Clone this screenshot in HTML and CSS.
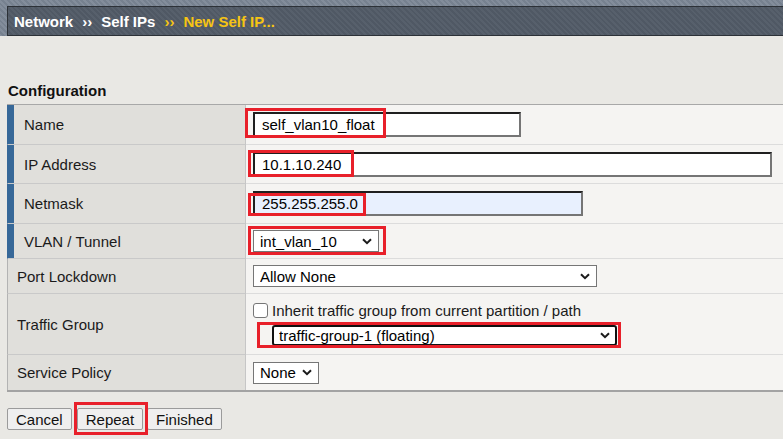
FILE: index.html
```html
<!DOCTYPE html>
<html lang="en">
<head>
<meta charset="utf-8">
<title>New Self IP</title>
<link rel="stylesheet" href="styles.css">
</head>
<body>
<header class="topbar">
  <nav class="crumbs">
    <span class="crumb">Network</span>
    <span class="sep">&rsaquo;&rsaquo;</span>
    <span class="crumb">Self IPs</span>
    <span class="sep current">&rsaquo;&rsaquo;</span>
    <span class="crumb current">New Self IP...</span>
  </nav>
</header>
<main class="page">
  <h2 class="section-title">Configuration</h2>
  <div class="config">
    <div class="label req">Name</div>
    <div class="value">
      <span class="mark mark-name"><input class="text w-name" type="text" value="self_vlan10_float"></span>
    </div>

    <div class="label req">IP Address</div>
    <div class="value">
      <span class="mark mark-ip"><input class="text w-ip" type="text" value="10.1.10.240"></span>
    </div>

    <div class="label req">Netmask</div>
    <div class="value">
      <span class="mark mark-mask"><input class="text w-mask autofill" type="text" value="255.255.255.0"></span>
    </div>

    <div class="label req">VLAN / Tunnel</div>
    <div class="value">
      <span class="mark mark-vlan">
        <span class="select w-vlan"><select><option>int_vlan_10</option></select><svg class="chev" width="10" height="7" viewBox="0 0 10 7"><polyline points="1,1.2 5,5.2 9,1.2"/></svg></span>
      </span>
    </div>

    <div class="label">Port Lockdown</div>
    <div class="value">
      <span class="select w-port"><select><option>Allow None</option></select><svg class="chev" width="10" height="7" viewBox="0 0 10 7"><polyline points="1,1.2 5,5.2 9,1.2"/></svg></span>
    </div>

    <div class="label">Traffic Group</div>
    <div class="value stack">
      <label class="inherit"><input class="check" type="checkbox">Inherit traffic group from current partition / path</label>
      <span class="mark mark-tg indent">
        <span class="select focused w-tg"><select><option>traffic-group-1 (floating)</option></select><svg class="chev" width="10" height="7" viewBox="0 0 10 7"><polyline points="1,1.2 5,5.2 9,1.2"/></svg></span>
      </span>
    </div>

    <div class="label last">Service Policy</div>
    <div class="value last">
      <span class="select w-svc"><select><option>None</option></select><svg class="chev" width="10" height="7" viewBox="0 0 10 7"><polyline points="1,1.2 5,5.2 9,1.2"/></svg></span>
    </div>
  </div>
  <div class="actions">
    <button class="btn" type="button">Cancel</button>
    <span class="mark mark-repeat"><button class="btn" type="button">Repeat</button></span>
    <button class="btn" type="button">Finished</button>
  </div>
</main>
</body>
</html>
```

FILE: styles.css
```css
*, *::before, *::after { box-sizing: border-box; }

html, body {
  margin: 0;
  padding: 0;
}

body {
  background: #e9e8e4;
  font-family: "Liberation Sans", Arial, sans-serif;
  font-size: 15px;
  color: #1a1a1a;
  width: 783px;
  height: 439px;
  overflow: hidden;
}

/* ---------- header ---------- */
.topbar {
  height: 36px;
  padding: 6px 0 0 7px;
  background-color: #7b8695;
  background-image: repeating-linear-gradient(45deg, rgba(255,255,255,0.06) 0 2px, rgba(0,0,0,0.04) 2px 4px);
}

.crumbs {
  height: 30px;
  display: flex;
  align-items: center;
  gap: 9px;
  padding-left: 6px;
  background-color: #525b67;
  background-image: repeating-linear-gradient(45deg, rgba(255,255,255,0.03) 0 2px, rgba(0,0,0,0.03) 2px 4px);
  border: 1px solid #2c3137;
  border-right: none;
  font-weight: bold;
  color: #ffffff;
  white-space: nowrap;
}

.crumbs .current { color: #f6c414; }

/* ---------- page ---------- */
.page {
  padding-left: 7px;
}

.section-title {
  margin: 0;
  padding-top: 46px;
  height: 68px;
  font-size: 15px;
  line-height: 18px;
  font-weight: bold;
  color: #111;
  padding-left: 1px;
}

.config {
  display: grid;
  grid-template-columns: 239px 1fr;
  grid-template-rows: 40px 39px 40px 35px 35px 61px 35px;
  border-top: 1px solid #a8a8a8;
  border-bottom: 2px solid #a3a3a3;
}

.label {
  display: flex;
  align-items: center;
  padding-left: 9px;
  background: #e0dfdb;
  border-left: 1px solid #b3b3b3;
  border-right: 1px solid #c6c6c6;
  border-bottom: 1px solid #c9c9c9;
  color: #1a1a1a;
}

.label.req {
  padding-left: 16px;
  border-left-color: #376898;
  box-shadow: inset 6px 0 0 #376898;
}

.value {
  display: flex;
  align-items: center;
  padding-left: 7px;
  background: #f5f4f2;
  border-bottom: 1px solid #dcdcdc;
}

.label.last, .value.last { border-bottom: none; }

.value.stack {
  flex-direction: column;
  align-items: flex-start;
  justify-content: center;
  gap: 6px;
}

/* ---------- inputs ---------- */
.text {
  height: 25px;
  margin: 0;
  padding: 0 0 0 7px;
  font: inherit;
  color: #000;
  background: #fff;
  border-style: solid;
  border-width: 2px;
  border-color: #1f1f1f #757575 #757575 #1f1f1f;
  outline: none;
}

.w-name { width: 268px; }
.w-ip { width: 519px; }
.w-mask { width: 330px; }
.text.autofill { background: #e8f0fe; }

.select {
  display: inline-flex;
  align-items: center;
  height: 22px;
  padding-right: 6px;
  background: #fff;
  border: 1px solid #767676;
}

.select select {
  flex: 1;
  min-width: 0;
  height: 100%;
  margin: 0;
  padding: 0 0 0 6px;
  border: none;
  background: transparent;
  font: inherit;
  color: #000;
  -webkit-appearance: none;
  appearance: none;
  outline: none;
}

.chev {
  flex: none;
  fill: none;
  stroke: #1b1b1b;
  stroke-width: 2;
}

.select.focused {
  border: 2px solid #111;
  border-radius: 3px;
  padding-right: 5px;
  height: 21px;
}
.select.focused select { padding-left: 5px; }

.w-vlan { width: 126px; }
.w-port { width: 344px; }
.w-tg { width: 345px; }
.w-svc { width: 66px; }

.inherit {
  display: flex;
  align-items: center;
  line-height: 17px;
  color: #1a1a1a;
}

.check {
  -webkit-appearance: none;
  appearance: none;
  width: 15px;
  height: 15px;
  margin: 0 4px 0 0;
  background: #fff;
  border: 1px solid #767676;
  border-radius: 3px;
}

.indent { margin-left: 19px; }

/* ---------- buttons ---------- */
.actions {
  display: flex;
  align-items: center;
  gap: 5px;
  margin-top: 16px;
}

.btn {
  height: 22px;
  margin: 0;
  padding: 0 8px;
  font: inherit;
  color: #111;
  background: #efefef;
  border: 1px solid #9b9b9b;
  border-radius: 2px;
}

.mark-repeat + .btn { margin-left: -1px; }

/* ---------- red annotation frames ---------- */
.mark {
  position: relative;
  display: inline-flex;
}

.mark::after {
  content: "";
  position: absolute;
  border: 3px solid #e8202a;
  pointer-events: none;
}

.mark-name::after { left: -8px; top: -4px; width: 141px; height: 30px; }
.mark-ip::after { left: -5px; top: -2px; width: 106px; height: 27px; }
.mark-mask::after { left: -5px; top: 2px; width: 118px; height: 23px; }
.mark-vlan::after { left: -5px; top: -4px; width: 138px; height: 29px; }
.mark-tg::after { left: -15px; top: -3px; width: 364px; height: 26px; }
.mark-repeat::after { left: -3px; top: -6px; width: 74px; height: 33px; }
```
